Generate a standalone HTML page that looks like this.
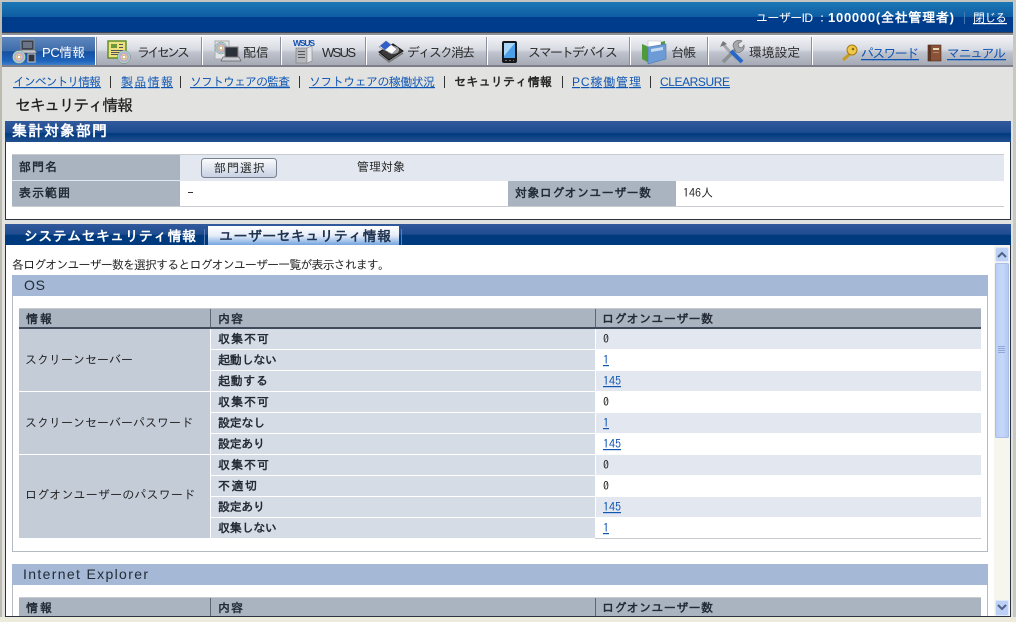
<!DOCTYPE html>
<html lang="ja"><head><meta charset="utf-8"><title>セキュリティ情報</title>
<style>
html,body{margin:0;padding:0;width:1016px;height:622px;overflow:hidden;background:#e2e2e0}
svg{display:block}
text{font-family:"IPAGothic","Noto Sans CJK JP",sans-serif;font-size:12px;fill:#262626}
.b{font-weight:bold;fill:#232b36}
.l{fill:#0f56b3;text-decoration:underline}
.w{fill:#fff}
.n{fill:#2b2b2b;font-size:13px}
.s{font-family:"Liberation Sans","IPAGothic",sans-serif}
</style></head><body>
<svg width="1016" height="622" viewBox="0 0 1016 622" xmlns="http://www.w3.org/2000/svg">
<defs>
<linearGradient id="top" x1="0" y1="0" x2="0" y2="1"><stop offset="0" stop-color="#1c78b6"/><stop offset=".5" stop-color="#0e5ca2"/><stop offset=".5" stop-color="#003c8c"/><stop offset="1" stop-color="#003c8c"/></linearGradient>
<linearGradient id="nav" x1="0" y1="0" x2="0" y2="1"><stop offset="0" stop-color="#f2f3f7"/><stop offset=".45" stop-color="#d8dbe3"/><stop offset=".55" stop-color="#bfc3cd"/><stop offset="1" stop-color="#a4a8b2"/></linearGradient>
<linearGradient id="act" x1="0" y1="0" x2="0" y2="1"><stop offset="0" stop-color="#5f87bd"/><stop offset=".5" stop-color="#3d6cab"/><stop offset=".52" stop-color="#15509f"/><stop offset=".85" stop-color="#1d64bd"/><stop offset="1" stop-color="#3f7fca"/></linearGradient>
<linearGradient id="ph" x1="0" y1="0" x2="0" y2="1"><stop offset="0" stop-color="#325a9c"/><stop offset=".55" stop-color="#1c4b90"/><stop offset=".6" stop-color="#003a7e"/><stop offset="1" stop-color="#22508f"/></linearGradient>
<linearGradient id="ph2" x1="0" y1="0" x2="0" y2="1"><stop offset="0" stop-color="#325a9c"/><stop offset=".5" stop-color="#1e4c90"/><stop offset=".52" stop-color="#003a7e"/><stop offset="1" stop-color="#003a7e"/></linearGradient>
<linearGradient id="tab" x1="0" y1="0" x2="0" y2="1"><stop offset="0" stop-color="#fff"/><stop offset=".5" stop-color="#e6edf8"/><stop offset="1" stop-color="#74a5e0"/></linearGradient>
<linearGradient id="btn" x1="0" y1="0" x2="0" y2="1"><stop offset="0" stop-color="#fbfcfd"/><stop offset="1" stop-color="#c6d0e2"/></linearGradient>
<linearGradient id="sb" x1="0" y1="0" x2="1" y2="0"><stop offset="0" stop-color="#b9cdf5"/><stop offset=".5" stop-color="#c6d8fa"/><stop offset="1" stop-color="#b4c9f2"/></linearGradient>
<radialGradient id="cd"><stop offset="0" stop-color="#fff"/><stop offset=".2" stop-color="#fff"/><stop offset=".27" stop-color="#888"/><stop offset=".35" stop-color="#f2d878"/><stop offset=".6" stop-color="#c79be0"/><stop offset=".85" stop-color="#8fd8b8"/><stop offset="1" stop-color="#e8e8e8"/></radialGradient>
</defs>

<!-- window chrome -->
<rect width="1016" height="622" fill="#e2e2e0"/>
<rect x="0" y="0" width="1016" height="2" fill="#c4c4c0"/>
<rect x="0" y="2" width="2" height="620" fill="#bdbab0"/>
<rect x="1013" y="2" width="3" height="620" fill="#c9c8c0"/>
<rect x="0" y="617" width="1016" height="5" fill="#ecebdc"/>

<!-- top bar -->
<rect x="2" y="2" width="1011" height="30" fill="url(#top)"/>
<rect x="2" y="32" width="1011" height="1" fill="#3a4658"/>
<rect x="2" y="33" width="1011" height="2" fill="#8c8f98"/>
<rect x="2" y="35" width="1011" height="1" fill="#fff"/>
<text class="w s" x="756" y="22" textLength="57">ユーザーID</text>
<text class="w" x="819" y="22">:</text>
<text class="w s" x="828" y="22" textLength="126" style="font-weight:bold;font-size:13px">100000(全社管理者)</text>
<rect x="964" y="12" width="1" height="12" fill="#4a7ab5"/>
<text class="w" x="973" y="22" textLength="34" style="text-decoration:underline">閉じる</text>

<!-- nav bar -->
<rect x="2" y="36" width="1011" height="30" fill="url(#nav)"/>
<rect x="2" y="65" width="1011" height="2" fill="#7d808b"/>
<rect x="2" y="37" width="93" height="28" fill="url(#act)"/>
<rect x="95" y="37" width="1" height="28" fill="#fff"/><rect x="202" y="37" width="1" height="28" fill="#fff"/><rect x="281" y="37" width="1" height="28" fill="#fff"/><rect x="366" y="37" width="1" height="28" fill="#fff"/><rect x="487" y="37" width="1" height="28" fill="#fff"/><rect x="630" y="37" width="1" height="28" fill="#fff"/><rect x="708" y="37" width="1" height="28" fill="#fff"/><rect x="812" y="37" width="1" height="28" fill="#fff"/>
<rect x="96" y="37" width="1" height="28" fill="#8c909c"/><rect x="201" y="37" width="1" height="28" fill="#8c909c"/><rect x="280" y="37" width="1" height="28" fill="#8c909c"/><rect x="365" y="37" width="1" height="28" fill="#8c909c"/><rect x="486" y="37" width="1" height="28" fill="#8c909c"/><rect x="629" y="37" width="1" height="28" fill="#8c909c"/><rect x="707" y="37" width="1" height="28" fill="#8c909c"/><rect x="811" y="37" width="1" height="28" fill="#8c909c"/>

<text class="w s" x="42" y="57" textLength="43" style="font-size:13px">PC情報</text>
<text class="n" x="137" y="57" textLength="53">ライセンス</text>
<text class="n" x="243" y="57" textLength="26">配信</text>
<text class="n s" x="322" y="57" textLength="34">WSUS</text>
<text class="n" x="407" y="57" textLength="68">ディスク消去</text>
<text class="n" x="528" y="57" textLength="90">スマートデバイス</text>
<text class="n" x="671" y="57" textLength="25">台帳</text>
<text class="n" x="749" y="57" textLength="51">環境設定</text>
<text class="l" x="861" y="58" textLength="58" style="font-size:13px">パスワード</text>
<text class="l" x="947" y="58" textLength="59" style="font-size:13px">マニュアル</text>

<!-- icon: PC -->
<g>
<rect x="21" y="40" width="13" height="10" fill="#3a404c" stroke="#8a8f98"/><rect x="23" y="42" width="9" height="6" fill="#6b7486"/>
<path d="M19 50h16l2 3H17z" fill="#c4c6d0" stroke="#555" stroke-width=".6"/>
<rect x="28" y="54" width="7" height="8" fill="#2e3440" stroke="#c4c8d0"/>
<circle cx="19" cy="57" r="6.500" fill="url(#cd)" stroke="#777" stroke-width=".5"/>
</g>
<!-- icon: license -->
<g>
<rect x="108" y="41" width="18" height="17" fill="#ece080" stroke="#5a8a20" stroke-width="1.4"/>
<rect x="111" y="44" width="6" height="4" fill="#6a9a3a"/>
<rect x="111" y="50" width="12" height="1" fill="#555"/><rect x="111" y="52" width="12" height="1" fill="#555"/><rect x="111" y="54" width="9" height="1" fill="#555"/><rect x="119" y="44" width="4" height="1" fill="#555"/><rect x="119" y="47" width="4" height="1" fill="#555"/>
<circle cx="124" cy="57" r="6.500" fill="url(#cd)" stroke="#777" stroke-width=".5"/>
</g>
<!-- icon: delivery -->
<g>
<rect x="215" y="41" width="14" height="18" fill="#e2e4e8" stroke="#aaa"/>
<circle cx="221" cy="48" r="6" fill="url(#cd)" stroke="#888" stroke-width=".5"/>
<rect x="225" y="47" width="13" height="10" fill="#2c3038" stroke="#888"/>
<path d="M223 57h16l2 4h-20z" fill="#c8cbd2" stroke="#666" stroke-width=".7"/>
</g>
<!-- icon: WSUS -->
<g>
<text x="293" y="46" textLength="22" style="font-size:8.500px;font-weight:bold;fill:#1450b0;font-family:'Liberation Sans',sans-serif">WSUS</text>
<path d="M296 48h11v15h-11z" fill="#b5b8bc" stroke="#777" stroke-width=".6"/>
<path d="M307 48l5-2v15l-5 2z" fill="#e2e3e5" stroke="#888" stroke-width=".6"/>
<rect x="298" y="51" width="7" height="1" fill="#555"/><rect x="298" y="54" width="7" height="1" fill="#555"/><rect x="298" y="57" width="7" height="1" fill="#555"/>
</g>
<!-- icon: disk erase -->
<g>
<path d="M379 52l14-8 10 7-14 9z" fill="#3a3a3a" stroke="#111"/>
<ellipse cx="393" cy="50" rx="6" ry="4" fill="#a0a0a0"/>
<path d="M379 54l10 8 14-9" stroke="#777" stroke-width="1.500" fill="none"/>
<path d="M379 47l7-6 11 8-5 5z" fill="#fff" stroke="#888" stroke-width=".6"/>
<path d="M380 46l6-5 5 4-6 5z" fill="#2f5fc8"/>
</g>
<!-- icon: smart device -->
<g>
<rect x="502" y="41" width="15" height="22" rx="2" fill="#16181c"/>
<rect x="504" y="43" width="11" height="15" fill="#4c9fe8"/>
<path d="M504 43h11l-11 13z" fill="#a9d6f8"/>
<rect x="505" y="60" width="2" height="1" fill="#777"/><rect x="509" y="60" width="2" height="1" fill="#777"/><rect x="513" y="60" width="1" height="1" fill="#777"/>
</g>
<!-- icon: ledger -->
<g>
<path d="M642 44l7 3v16l-7-4z" fill="#4f9a3c"/>
<path d="M648 41h13v8h-13z" fill="#fff" stroke="#bbb" stroke-width=".6"/>
<path d="M661 42l4-1v6h-4z" fill="#4f9a3c"/>
<path d="M648 47l18-3v15l-18 5z" fill="#6c9bd6" stroke="#4a78b5" stroke-width=".6"/>
<path d="M651 49l12-2v3l-12 2z" fill="#c6daf2"/>
</g>
<!-- icon: tools -->
<g>
<path d="M722 43l15 17" stroke="#a5a8ac" stroke-width="3"/>
<path d="M720 47l3-6 4 3z" fill="#777"/>
<path d="M738 47l-15 15" stroke="#8c8f93" stroke-width="3.500"/>
<path d="M733 46a6 6 0 0 1 9-5l-4 3 1 3 3 1 2-3a6 6 0 0 1-8 7z" fill="#a5a8ac" stroke="#666" stroke-width=".6"/>
<path d="M731 51l11 11" stroke="#2566c8" stroke-width="4"/>
</g>
<!-- icon: key -->
<g>
<path d="M851 53l-8 7" stroke="#c99a1e" stroke-width="3"/>
<circle cx="852" cy="50" r="5" fill="#efc84a" stroke="#a87a12"/>
<circle cx="853" cy="49" r="1.300" fill="#8c6a10"/>
</g>
<!-- icon: book -->
<g>
<rect x="928" y="45" width="13" height="16" fill="#8a5238" stroke="#4d2c1c" stroke-width=".6"/>
<rect x="928" y="45" width="3" height="16" fill="#5e3522"/>
<rect x="933" y="48" width="6" height="2" fill="#e7d8b8"/>
<rect x="933" y="52" width="6" height="1" fill="#b98a68"/>
</g>

<!-- sub navigation -->
<text class="l" x="13" y="86" textLength="88">インベントリ情報</text>
<rect x="110" y="76" width="1" height="12" fill="#333"/>
<text class="l" x="121" y="86" textLength="52">製品情報</text>
<rect x="180" y="76" width="1" height="12" fill="#333"/>
<text class="l" x="190" y="86" textLength="100">ソフトウェアの監査</text>
<rect x="299" y="76" width="1" height="12" fill="#333"/>
<text class="l" x="309" y="86" textLength="126">ソフトウェアの稼働状況</text>
<rect x="444" y="76" width="1" height="12" fill="#333"/>
<text x="454" y="86" textLength="98" style="font-weight:bold">セキュリティ情報</text>
<rect x="562" y="76" width="1" height="12" fill="#333"/>
<text class="l s" x="572" y="86" textLength="69">PC稼働管理</text>
<rect x="650" y="76" width="1" height="12" fill="#333"/>
<text class="l s" x="660" y="86" textLength="70">CLEARSURE</text>
<text x="15" y="111" textLength="118" style="font-size:16px;fill:#1e1e1e;stroke:#1e1e1e;stroke-width:.25px">セキュリティ情報</text>

<!-- panel 1 -->
<rect x="5" y="121" width="1006" height="99" fill="#2b3440"/>
<rect x="6" y="141" width="1004" height="78" fill="#fff"/>
<rect x="5" y="121" width="1006" height="21" fill="url(#ph)"/>
<text class="w" x="12" y="136" textLength="95" style="font-size:15px;font-weight:bold">集計対象部門</text>
<rect x="12" y="154" width="992" height="1" fill="#c8cbd0"/>
<rect x="12" y="155" width="992" height="26" fill="#e3e8f0"/>
<rect x="12" y="155" width="168" height="25" fill="#aab4c0"/>
<rect x="12" y="181" width="168" height="25" fill="#aab4c0"/>
<rect x="508" y="181" width="168" height="25" fill="#aab4c0"/>
<rect x="12" y="206" width="992" height="1" fill="#c8cbd0"/>
<text class="b" x="19" y="171" textLength="38">部門名</text>
<text class="b" x="19" y="197" textLength="51">表示範囲</text>
<text class="b" x="515" y="197" textLength="136">対象ログオンユーザー数</text>
<rect x="201.500" y="158.500" width="75" height="19" rx="3" fill="url(#btn)" stroke="#77818f"/>
<text x="214" y="172" textLength="51">部門選択</text>
<text x="357" y="171" textLength="48">管理対象</text>
<rect x="188" y="192" width="5" height="1" fill="#333"/>
<text x="683" y="197" textLength="30">146人</text>

<!-- panel 2 -->
<rect x="5" y="224" width="1006" height="393" fill="#2b3440"/>
<rect x="6" y="245" width="1004" height="371" fill="#fff"/>
<rect x="5" y="224" width="1006" height="21" fill="url(#ph2)"/>
<text class="w" x="24" y="241" textLength="172" style="font-size:14px;font-weight:bold">システムセキュリティ情報</text>
<rect x="204" y="229" width="1" height="16" fill="#5b80b8"/>
<rect x="208" y="226" width="191" height="19" fill="url(#tab)"/>
<rect x="401" y="229" width="1" height="16" fill="#5b80b8"/>
<text x="219" y="241" textLength="172" style="font-size:14px;font-weight:bold;fill:#1f3350">ユーザーセキュリティ情報</text>

<text x="12" y="269" textLength="378">各ログオンユーザー数を選択するとログオンユーザー一覧が表示されます。</text>

<!-- OS box -->
<rect x="12.500" y="290.500" width="975" height="261" fill="#fff" stroke="#b4bbc4"/>
<rect x="12" y="275" width="976" height="21" fill="#a5b9d6"/>
<text class="s" x="24" y="290" textLength="21" style="font-size:14px;fill:#232b36">OS</text>

<!-- table 1 -->
<rect x="19" y="308" width="962" height="1" fill="#c8cbd0"/>
<rect x="19" y="309" width="962" height="18" fill="#aab4c0"/>
<rect x="19" y="327" width="962" height="2" fill="#3f4a5a"/>
<rect x="210" y="309" width="1" height="18" fill="#5c6674"/>
<rect x="595" y="309" width="1" height="18" fill="#5c6674"/>
<text class="b" x="26" y="323" textLength="26">情報</text>
<text class="b" x="218" y="323" textLength="25">内容</text>
<text class="b" x="602" y="323" textLength="111">ログオンユーザー数</text>

<rect x="19" y="329" width="191" height="209" fill="#c4ccd8"/>
<rect x="19" y="391" width="191" height="1" fill="#fff"/>
<rect x="19" y="454" width="191" height="1" fill="#fff"/>
<rect x="211" y="329" width="384" height="209" fill="#d6dce5"/>
<rect x="596" y="329" width="385" height="20" fill="#e3e8f0"/>
<rect x="596" y="371" width="385" height="20" fill="#e3e8f0"/>
<rect x="596" y="413" width="385" height="20" fill="#e3e8f0"/>
<rect x="596" y="455" width="385" height="20" fill="#e3e8f0"/>
<rect x="596" y="497" width="385" height="20" fill="#e3e8f0"/>
<rect x="211" y="349" width="384" height="1" fill="#fff"/><rect x="211" y="370" width="384" height="1" fill="#fff"/><rect x="211" y="391" width="384" height="1" fill="#fff"/><rect x="211" y="412" width="384" height="1" fill="#fff"/><rect x="211" y="433" width="384" height="1" fill="#fff"/><rect x="211" y="454" width="384" height="1" fill="#fff"/><rect x="211" y="475" width="384" height="1" fill="#fff"/><rect x="211" y="496" width="384" height="1" fill="#fff"/><rect x="211" y="517" width="384" height="1" fill="#fff"/>
<rect x="595" y="538" width="386" height="1" fill="#c8cbd0"/>

<text x="25" y="364" textLength="108">スクリーンセーバー</text>
<text x="25" y="427" textLength="168">スクリーンセーバーパスワード</text>
<text x="25" y="499" textLength="170">ログオンユーザーのパスワード</text>

<text class="b" x="218" y="343" textLength="51">収集不可</text>
<text class="b" x="218" y="364" textLength="59">起動しない</text>
<text class="b" x="218" y="385" textLength="50">起動する</text>
<text class="b" x="218" y="406" textLength="51">収集不可</text>
<text class="b" x="218" y="427" textLength="47">設定なし</text>
<text class="b" x="218" y="448" textLength="47">設定あり</text>
<text class="b" x="218" y="469" textLength="51">収集不可</text>
<text class="b" x="218" y="490" textLength="39">不適切</text>
<text class="b" x="218" y="511" textLength="47">設定あり</text>
<text class="b" x="218" y="532" textLength="59">収集しない</text>

<text x="603" y="343">0</text>
<text class="l" x="603" y="364">1</text>
<text class="l" x="603" y="385">145</text>
<text x="603" y="406">0</text>
<text class="l" x="603" y="427">1</text>
<text class="l" x="603" y="448">145</text>
<text x="603" y="469">0</text>
<text x="603" y="490">0</text>
<text class="l" x="603" y="511">145</text>
<text class="l" x="603" y="532">1</text>

<!-- IE box -->
<rect x="987" y="585" width="1" height="31" fill="#b4bbc4"/>
<rect x="12" y="585" width="1" height="31" fill="#b4bbc4"/>
<rect x="12" y="564" width="976" height="21" fill="#a5b9d6"/>
<text class="s" x="23" y="579" textLength="125" style="font-size:14px;fill:#232b36">Internet Explorer</text>
<rect x="19" y="597" width="962" height="1" fill="#c8cbd0"/>
<rect x="19" y="598" width="962" height="18" fill="#aab4c0"/>
<rect x="210" y="598" width="1" height="18" fill="#5c6674"/>
<rect x="595" y="598" width="1" height="18" fill="#5c6674"/>
<text class="b" x="26" y="612" textLength="26">情報</text>
<text class="b" x="218" y="612" textLength="25">内容</text>
<text class="b" x="602" y="612" textLength="111">ログオンユーザー数</text>

<!-- scrollbar -->
<rect x="994" y="245" width="16" height="371" fill="#f6f5ee"/>
<rect x="995.500" y="247.500" width="13" height="14" rx="1.500" fill="#bdd0f5" stroke="#dfe8fa"/>
<path d="M998 257l4-4 4 4" fill="none" stroke="#4d6185" stroke-width="2"/>
<rect x="995.500" y="263.500" width="13" height="174" rx="1" fill="url(#sb)" stroke="#a9bde8"/>
<rect x="998" y="346" width="7" height="1" fill="#8fa8d8"/><rect x="998" y="348" width="7" height="1" fill="#8fa8d8"/><rect x="998" y="350" width="7" height="1" fill="#8fa8d8"/><rect x="998" y="352" width="7" height="1" fill="#8fa8d8"/>
<rect x="995.500" y="600.500" width="13" height="15" rx="1.500" fill="#bdd0f5" stroke="#dfe8fa"/>
<path d="M998 605l4 4 4-4" fill="none" stroke="#4d6185" stroke-width="2"/>
<rect x="5" y="616" width="1006" height="1" fill="#2b3440"/>
</svg>
</body></html>
